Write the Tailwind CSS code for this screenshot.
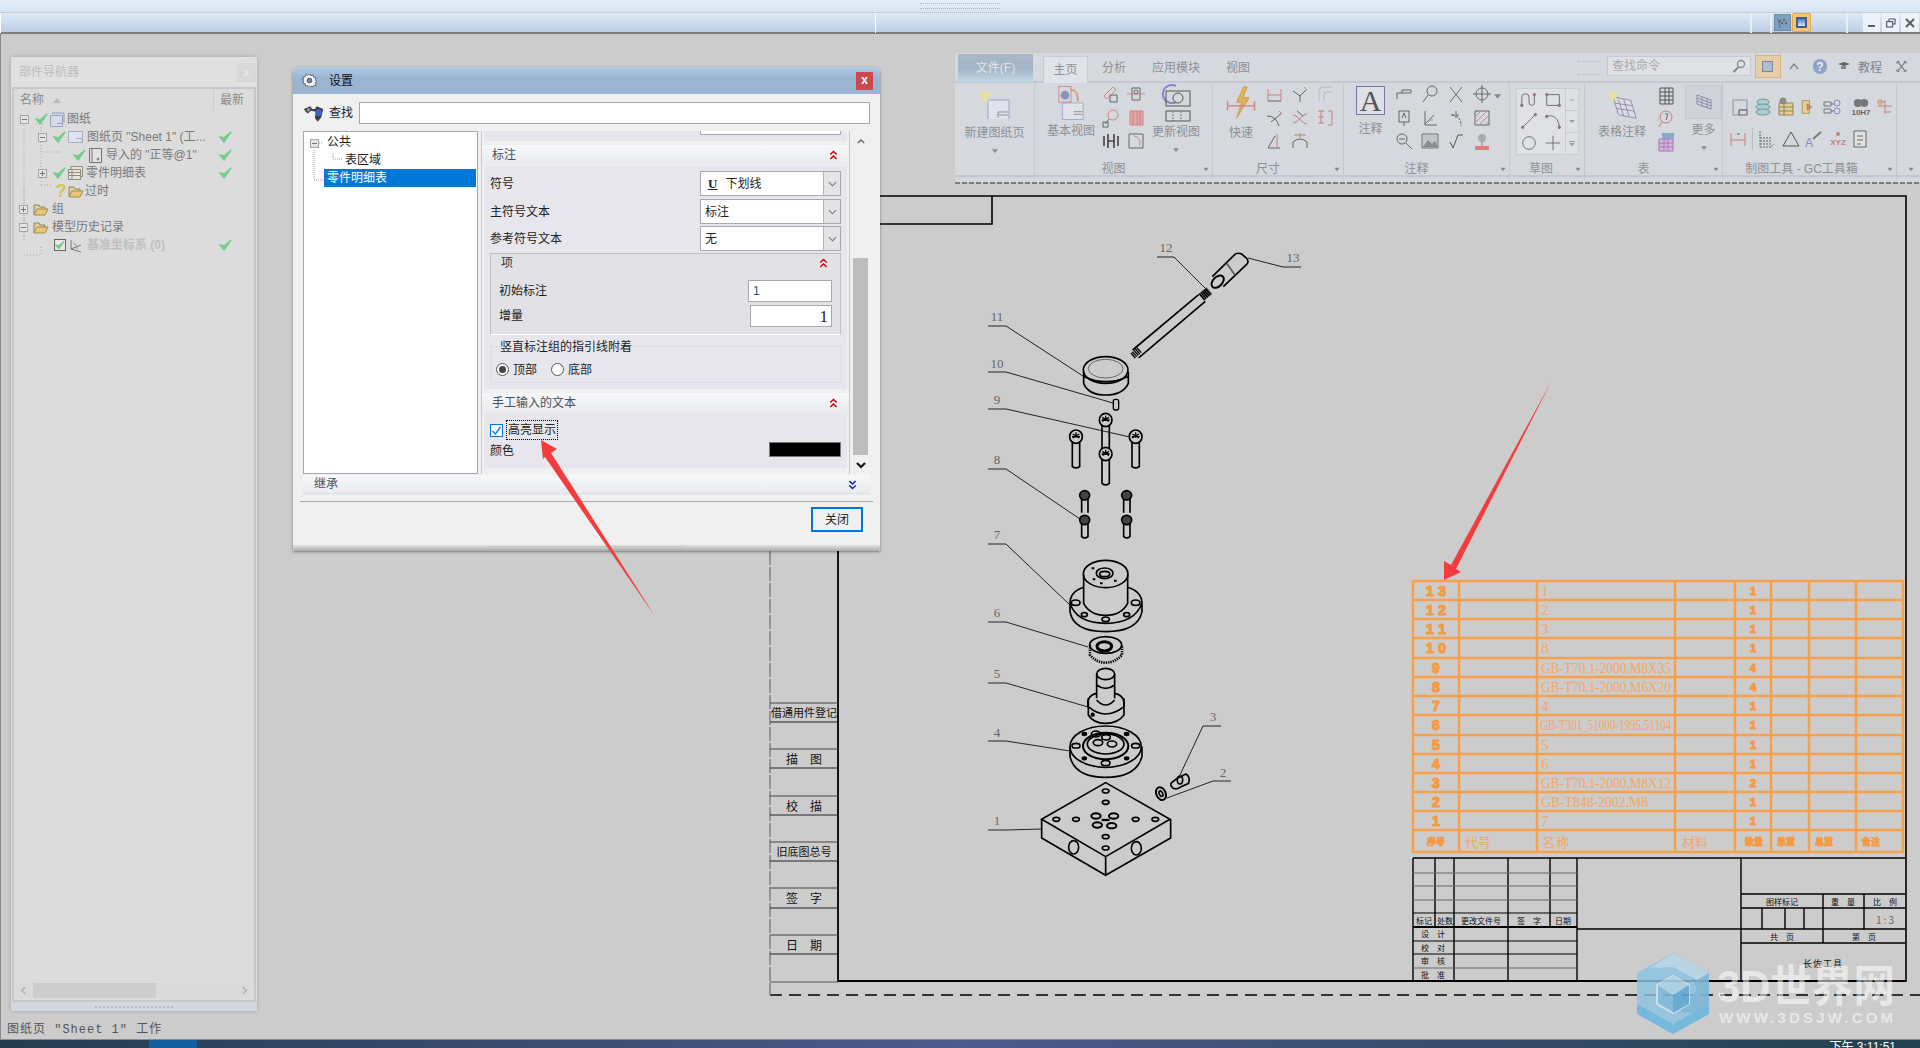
<!DOCTYPE html>
<html lang="zh-CN">
<head>
<meta charset="UTF-8">
<title>设置</title>
<script src="https://cdn.jsdelivr.net/npm/@tailwindcss/browser@4"></script>
</head>
<body class="relative w-[1920px] h-[1048px] overflow-hidden bg-[#cccccc] text-[12px] leading-none text-[#222] font-['Liberation_Sans','Noto_Sans_CJK_SC',sans-serif]">

<!-- shared symbols -->
<svg class="absolute w-0 h-0">
  <symbol id="chk" viewBox="0 0 13 12"><path d="M1 6l4 5L12 1 5 7z" fill="#76cc8b" stroke="#76cc8b" stroke-width="1.4"/></symbol>
  <symbol id="folder" viewBox="0 0 16 14"><path d="M1 13V3h5l1 2h5v2" fill="#e2cf9c" stroke="#8f8468"/><path d="M1 13l3-6h11l-3 6z" fill="#e9c876" stroke="#a08c58"/></symbol>
  <symbol id="minus" viewBox="0 0 9 9"><rect x=".5" y=".5" width="8" height="8" fill="#e4e4e4" stroke="#a5a5a5"/><path d="M2 4.5h5" stroke="#777"/></symbol>
  <symbol id="plus" viewBox="0 0 9 9"><rect x=".5" y=".5" width="8" height="8" fill="#e4e4e4" stroke="#a5a5a5"/><path d="M2 4.5h5M4.5 2v5" stroke="#777"/></symbol>
  <symbol id="up2" viewBox="0 0 10 12"><path d="M1.5 5L5 1.5 8.5 5M1.5 10L5 6.5 8.5 10" fill="none" stroke="currentColor" stroke-width="1.5"/></symbol>
  <symbol id="down2" viewBox="0 0 10 12"><path d="M1.5 2L5 5.5 8.5 2M1.5 7L5 10.5 8.5 7" fill="none" stroke="currentColor" stroke-width="1.5"/></symbol>
  <symbol id="dd" viewBox="0 0 10 6"><path d="M1 1l4 4 4-4" fill="none" stroke="#777" stroke-width="1.2"/></symbol>
  <g id="screw"><ellipse cx="0" cy="0" rx="19" ry="20" fill="#ccc" stroke="#000" stroke-width="5"/><path d="M-10-8l20 12M10-8L-10 4M0-13v16M-12 0h24" stroke="#000" stroke-width="4"/></g>
</svg>

<!-- top window strip -->
<div class="absolute left-0 top-0 w-full h-[12px] bg-gradient-to-b from-[#e6eff9] to-[#d6e4f4] flex justify-center">
  <div class="w-[80px] h-[6px] mt-[3px] border-y border-dotted border-[#a9b6c6]"></div>
</div>
<div class="absolute left-0 top-[13px] w-full h-[21px] bg-gradient-to-b from-[#dfe9f5] to-[#bccfe6] border-b-2 border-[#7d7d7d] flex items-start">
  <div class="w-px h-[20px] bg-white"></div>
  <div class="ml-[874px] w-px h-[20px] bg-white"></div>
  <div class="ml-[874px] w-[2px] h-[20px] bg-[#e9eef5]"></div>
  <div class="ml-[18px] w-[2px] h-[20px] bg-[#e9eef5]"></div>
  <div class="ml-[2px] w-[17px] h-[17px] mt-px bg-[#7ba0c4] border border-[#6c8cab] flex items-center justify-center">
    <svg viewBox="0 0 14 14" class="w-[14px] h-[14px]"><path d="M2 3l9-1 1 6-8 2z" fill="#8c9aab"/><path d="M3 4h2v2H3zM7 3h2v2H7zM5 6h2v2H5zM9 6h2v2H9z" fill="#5d6b7c"/><path d="M2 3l2 9" stroke="#5d6b7c"/></svg>
  </div>
  <div class="ml-[1px] w-[19px] h-[19px] bg-[#f2c878] border border-[#e3a845] rounded-[2px] flex items-center justify-center">
    <div class="w-[11px] h-[11px] border-2 border-[#4b5c7d] bg-gradient-to-b from-[#3f7fd0] to-[#dfeaf7]"></div>
  </div>
  <div class="ml-[35px] w-[2px] h-[20px] bg-[#e9eef5]"></div>
  <div class="ml-[15px] w-[17px] h-[19px] bg-[#edf2f8] flex items-end justify-center pb-[5px]"><div class="w-[7px] h-[2px] bg-[#54606e]"></div></div>
  <div class="ml-[2px] w-[17px] h-[19px] bg-[#edf2f8] flex items-center justify-center">
    <svg viewBox="0 0 10 10" class="w-[10px] h-[10px]" fill="none" stroke="#54606e" stroke-width="1.2"><rect x=".6" y="3.6" width="6" height="5.4"/><path d="M3 3V1h6v5H7"/></svg>
  </div>
  <div class="ml-[2px] w-[18px] h-[19px] bg-[#edf2f8] flex items-center justify-center">
    <svg viewBox="0 0 10 10" class="w-[10px] h-[10px]" stroke="#54606e" stroke-width="2"><path d="M1 1l8 8M9 1l-8 8"/></svg>
  </div>
</div>
<div class="absolute left-0 top-[34px] w-px h-[1006px] bg-[#8a8a8a]"></div>

<!-- drawing sheet -->
<svg class="absolute left-0 top-0" width="1920" height="1048" viewBox="0 0 1920 1048" fill="none">
  <g stroke="#000">
    <path d="M880 196H1906V982M880 224H992V196" stroke-width="1.6"/>
    <path d="M838 551V981H1905" stroke-width="1.8"/>
    <path d="M770 995H1920" stroke-dasharray="12 7" stroke-width="1.3"/>
    <path d="M770 551V995" stroke="#777" stroke-dasharray="14 2" stroke-width="1.3"/>
    <path d="M770 982H838" stroke="#555"/>
    <path d="M770 703H838M770 749H838M770 796H838M770 842H838M770 888H838M770 935H838" stroke="#444"/>
    <path d="M770 722H838M770 815H838M770 861H838M770 908H838M770 768H838M770 954H838" stroke="#222"/>
  </g>
  <path d="M955 183H1920" stroke="#7b7b7b" stroke-width="2" stroke-dasharray="5 2"/>
  <g fill="#111" font-size="11" text-anchor="middle" class="font-['Noto_Sans_CJK_SC',sans-serif]">
    <text x="804" y="717">借通用件登记</text>
    <text x="804" y="764" font-size="12">描　图</text>
    <text x="804" y="811" font-size="12">校　描</text>
    <text x="804" y="856">旧底图总号</text>
    <text x="804" y="903" font-size="12">签　字</text>
    <text x="804" y="950" font-size="12">日　期</text>
  </g>

  <!-- leaders and balloons -->
  <g stroke="#222" stroke-width="1">
    <path d="M1157 257h17l31 31M1248 258l35 9h18M988 326h18l77 50M988 372h18l107 31M988 409h18l124 28M988 469h18l74 50M988 544h18l64 61M988 622h18l82 25M988 683h18l82 24M988 741h18l64 10M988 830h18l36-1M1221 726h-18l-23 49M1231 781h-18l-46 17"/>
  </g>
  <g fill="#666" font-size="13" text-anchor="middle" class="font-['Liberation_Serif',serif]">
    <text x="1166" y="252">12</text><text x="1293" y="262">13</text><text x="997" y="321">11</text><text x="997" y="368">10</text>
    <text x="997" y="404">9</text><text x="997" y="464">8</text><text x="997" y="539">7</text><text x="997" y="617">6</text>
    <text x="997" y="678">5</text><text x="997" y="737">4</text><text x="997" y="825">1</text><text x="1213" y="721">3</text><text x="1223" y="777">2</text>
  </g>

  <!-- upper parts, in 3x crop coordinates -->
  <g transform="translate(960 220) scale(.3333)" stroke="#000" stroke-width="5">
    <path d="M518 390L716 224M536 414L736 244"/>
    <path d="M724 232L748 212" stroke-width="26" stroke-dasharray="5 1"/>
    <path d="M518 408L540 388" stroke-width="20" stroke-dasharray="4 2"/>
    <path d="M757 170L825 103Q835 97 845 102L860 115Q868 125 860 133L790 200"/>
    <ellipse cx="773" cy="185" rx="22" ry="14" transform="rotate(-45 773 185)" stroke-width="6"/>
    <path d="M800 130L825 165" stroke="#666" stroke-width="6"/>
    <ellipse cx="437" cy="450" rx="67" ry="40"/>
    <path d="M371 455V490Q385 525 437 525T505 490V455M373 470Q437 500 503 470"/>
    <ellipse cx="437" cy="446" rx="52" ry="28" stroke="#666" stroke-width="3"/>
    <rect x="460" y="538" width="16" height="32" rx="6" stroke-width="4"/>
    <path d="M426 600V690M448 600V690M426 702V790Q437 800 448 790V702M337 650V740Q348 748 359 740V650M516 650V740Q527 748 538 740V650"/>
    <use href="#screw" x="437" y="600"/><use href="#screw" x="348" y="650"/><use href="#screw" x="527" y="650"/><use href="#screw" x="437" y="702"/>
    <path d="M365 826V878M384 826V878M491 826V878M510 826V878M365 900V950Q374 958 384 950V900M491 900V950Q500 958 510 950V900"/>
    <ellipse cx="374" cy="826" rx="15" ry="14" fill="#444"/><ellipse cx="500" cy="826" rx="15" ry="14" fill="#444"/>
    <ellipse cx="374" cy="900" rx="15" ry="14" fill="#444"/><ellipse cx="500" cy="900" rx="15" ry="14" fill="#444"/>
    <path d="M371 1102C340 1112 330 1130 330 1150V1175Q340 1235 437 1235T546 1175V1150C546 1130 534 1112 503 1102M330 1150Q350 1210 437 1210T546 1150"/>
    <ellipse cx="437" cy="1062" rx="67" ry="41"/>
    <path d="M371 1065V1150Q390 1186 437 1186T503 1150V1065"/>
    <ellipse cx="434" cy="1060" rx="25" ry="16" stroke-width="5"/><ellipse cx="434" cy="1062" rx="15" ry="8"/>
    <path d="M395 1045h8M398 1078h8M462 1082h8M420 1090h8" stroke-width="6"/>
  </g>

  <!-- lower parts, in 3x crop coordinates -->
  <g transform="translate(960 600) scale(.3333)" stroke="#000" stroke-width="5">
    <ellipse cx="347" cy="8" rx="13" ry="8"/><ellipse cx="527" cy="8" rx="13" ry="8"/><ellipse cx="373" cy="44" rx="9" ry="6"/><ellipse cx="500" cy="44" rx="9" ry="6"/><ellipse cx="437" cy="58" rx="11" ry="7"/>
    <path d="M390 135V165Q410 188 437 188T486 165V135" stroke-width="8" stroke-dasharray="4 3"/>
    <ellipse cx="437" cy="135" rx="48" ry="25"/>
    <ellipse cx="433" cy="139" rx="22" ry="14" stroke-width="9"/>
    <path d="M410 222V295M464 222V295M385 295V345Q400 370 437 370T492 345V295"/>
    <ellipse cx="437" cy="222" rx="27" ry="17"/>
    <path d="M410 280C385 285 380 305 385 320Q410 342 437 342T492 320C495 305 490 285 464 280M410 300Q437 330 464 300M410 255Q437 275 464 255"/>
    <circle cx="398" cy="344" r="4" fill="#000"/>
    <ellipse cx="437" cy="440" rx="107" ry="62"/>
    <path d="M330 440V470Q345 532 437 532T546 470V440"/>
    <ellipse cx="437" cy="438" rx="68" ry="40" stroke-width="6"/>
    <ellipse cx="437" cy="432" rx="55" ry="30"/>
    <ellipse cx="408" cy="402" rx="14" ry="9"/><ellipse cx="438" cy="412" rx="13" ry="8"/><ellipse cx="414" cy="428" rx="14" ry="9"/><ellipse cx="456" cy="432" rx="14" ry="9"/>
    <ellipse cx="348" cy="437" rx="12" ry="7"/><ellipse cx="527" cy="437" rx="12" ry="7"/><ellipse cx="437" cy="489" rx="13" ry="8"/>
    <ellipse cx="373" cy="402" rx="6" ry="4" fill="#000"/><ellipse cx="500" cy="402" rx="6" ry="4" fill="#000"/><ellipse cx="373" cy="475" rx="6" ry="4" fill="#000"/><ellipse cx="500" cy="475" rx="6" ry="4" fill="#000"/>
    <path d="M652 535L678 522Q692 530 686 550L660 562Q650 570 640 565Q628 555 635 548z"/>
    <ellipse cx="660" cy="540" rx="8" ry="12"/>
    <ellipse cx="603" cy="581" rx="14" ry="20" transform="rotate(-25 603 581)" stroke-width="6"/><ellipse cx="603" cy="581" rx="5" ry="9" transform="rotate(-25 603 581)"/>
    <path d="M437 548L630 658 437 770 245 658zM245 658V714L437 826 632 714V658M437 770V826"/>
    <ellipse cx="437" cy="573" rx="10" ry="6"/><ellipse cx="437" cy="607" rx="10" ry="6"/><ellipse cx="289" cy="658" rx="10" ry="6"/><ellipse cx="348" cy="658" rx="10" ry="6"/><ellipse cx="527" cy="658" rx="10" ry="6"/><ellipse cx="586" cy="658" rx="10" ry="6"/><ellipse cx="437" cy="710" rx="10" ry="6"/><ellipse cx="437" cy="744" rx="10" ry="6"/>
    <ellipse cx="408" cy="648" rx="14" ry="8" stroke-width="6"/><ellipse cx="461" cy="648" rx="14" ry="8" stroke-width="6"/><ellipse cx="412" cy="675" rx="14" ry="8" stroke-width="6"/><ellipse cx="455" cy="677" rx="14" ry="8" stroke-width="6"/>
    <path d="M425 660h24" stroke-width="7"/>
    <ellipse cx="341" cy="742" rx="15" ry="20"/><ellipse cx="529" cy="745" rx="15" ry="20"/>
  </g>

  <!-- parts list -->
  <g stroke="#f9a04b" stroke-width="2.5">
    <rect x="1413" y="581" width="490" height="271"/>
    <path d="M1413 600H1903M1413 619H1903M1413 638H1903M1413 658H1903M1413 677H1903M1413 696H1903M1413 715H1903M1413 735H1903M1413 754H1903M1413 773H1903M1413 792H1903M1413 811H1903M1413 830H1903"/>
    <path d="M1459 581V852M1537 581V852M1675 581V852M1735 581V852M1771 581V852M1809 581V852M1856 581V852"/>
  </g>
  <g fill="#f59a45" stroke="#f59a45" stroke-width="1.2" font-weight="700" font-size="14" text-anchor="middle" class="font-['Liberation_Sans',sans-serif]">
    <text x="1436" y="596" textLength="20">13</text><text x="1436" y="615" textLength="20">12</text><text x="1436" y="634" textLength="20">11</text><text x="1436" y="653" textLength="20">10</text>
    <text x="1436" y="673">9</text><text x="1436" y="692">8</text><text x="1436" y="711">7</text><text x="1436" y="730">6</text><text x="1436" y="750">5</text><text x="1436" y="769">4</text><text x="1436" y="788">3</text><text x="1436" y="807">2</text><text x="1436" y="826">1</text>
    <text x="1753" y="595" font-size="11">1</text><text x="1753" y="614" font-size="11">1</text><text x="1753" y="633" font-size="11">1</text><text x="1753" y="652" font-size="11">1</text><text x="1753" y="672" font-size="11">4</text><text x="1753" y="691" font-size="11">4</text><text x="1753" y="710" font-size="11">1</text><text x="1753" y="729" font-size="11">1</text><text x="1753" y="749" font-size="11">1</text><text x="1753" y="768" font-size="11">1</text><text x="1753" y="787" font-size="11">2</text><text x="1753" y="806" font-size="11">1</text><text x="1753" y="825" font-size="11">1</text>
  </g>
  <g fill="#f4a766" font-size="15" class="font-['Liberation_Serif',serif]">
    <text x="1541" y="596">1</text><text x="1541" y="615">2</text><text x="1541" y="634">3</text><text x="1541" y="653">8</text>
    <text x="1541" y="673" textLength="130" lengthAdjust="spacingAndGlyphs">GB-T70.1-2000,M8X35</text>
    <text x="1541" y="692" textLength="130" lengthAdjust="spacingAndGlyphs">GB-T70.1-2000,M6X20</text>
    <text x="1541" y="711">4</text>
    <text x="1540" y="730" textLength="131" lengthAdjust="spacingAndGlyphs">GB-T301_51000-1995,51104</text>
    <text x="1541" y="750">5</text><text x="1541" y="769">6</text>
    <text x="1541" y="788" textLength="130" lengthAdjust="spacingAndGlyphs">GB-T70.1-2000,M8X12</text>
    <text x="1541" y="807" textLength="107" lengthAdjust="spacingAndGlyphs">GB-T848-2002,M8</text>
    <text x="1541" y="826">7</text>
  </g>
  <g fill="#f4a766" font-size="13" class="font-['Noto_Sans_CJK_SC',sans-serif]">
    <text x="1465" y="847" textLength="26">代号</text><text x="1542" y="847" textLength="27">名称</text><text x="1682" y="847" textLength="26">材料</text>
  </g>
  <g fill="#f59a45" stroke="#f59a45" stroke-width=".8" font-size="9" font-weight="700" class="font-['Noto_Sans_CJK_SC',sans-serif]">
    <text x="1427" y="845">序号</text><text x="1745" y="845">数量</text><text x="1777" y="845">单重</text><text x="1815" y="845">总重</text><text x="1862" y="845">备注</text>
  </g>

  <!-- title block -->
  <g stroke="#000" stroke-width="1.4">
    <path d="M1413 858H1905M1413 858V981M1435 858V927M1454 858V981M1508 858V981M1550 858V927M1577 858V981M1741 858V981M1577 929H1905M1741 894H1905M1741 908H1905M1741 943H1905M1823 894V943M1864 894V930M1762 908V929M1785 908V929M1804 908V929"/>
    <path d="M1413 927H1577" stroke-width="2"/>
    <path d="M1413 913H1577M1413 941H1577M1413 954H1577" stroke-width="1.2"/>
    <path d="M1413 873H1577M1413 886H1577M1413 900H1577M1413 968H1577" stroke="#666" stroke-width="1.2"/>
  </g>
  <g fill="#111" font-size="8" text-anchor="middle" class="font-['Noto_Sans_CJK_SC',sans-serif]">
    <text x="1424" y="924">标记</text><text x="1445" y="924">处数</text><text x="1481" y="924">更改文件号</text><text x="1529" y="924">签　字</text><text x="1563" y="924">日期</text>
    <text x="1433" y="937">设　计</text><text x="1433" y="951">校　对</text><text x="1433" y="964">审　核</text><text x="1433" y="978">批　准</text>
    <text x="1782" y="905">图样标记</text><text x="1843" y="905">重　量</text><text x="1885" y="905">比　例</text>
    <text x="1885" y="924" fill="#666" font-size="10" textLength="18">1:3</text>
    <text x="1782" y="940">共　页</text><text x="1864" y="940">第　页</text>
    <text x="1823" y="967" font-size="9" letter-spacing="1">长佐工具</text>
  </g>

  <!-- red annotation arrow over the list -->
  <path d="M1444 580L1444 561 1451 565 1551 382 1456 569 1461 572z" fill="#f33c3c"/>

  <!-- watermark -->
  <g opacity=".9">
    <path d="M1673 953L1709 973V1014L1673 1034 1637 1014V973z" fill="#8dc4e2" fill-opacity=".9"/>
    <path d="M1673 953L1709 973V1014L1680 1012 1697 990C1690 970 1680 960 1673 953z" fill="#7cb6d8"/>
    <path d="M1637 1004L1673 1024 1709 1004V1014L1673 1034 1637 1014z" fill="#6cb7de"/>
    <path d="M1673 953L1709 973 1697 980 1673 967 1650 968z" fill="#b7d6e8"/>
    <path d="M1673 976L1689 985V1004L1673 1013 1657 1004V985z" fill="#7fbbdb" stroke="#cfe0ea" stroke-width="2"/>
    <path d="M1673 995V1013L1689 1004V985z" fill="#5fa8d2"/>
    <path d="M1657 985L1673 976 1689 985 1673 995z" fill="#a9d2e8"/>
  </g>
  <g fill="#fff" fill-opacity=".55" text-anchor="start" class="font-['Liberation_Sans','Noto_Sans_CJK_SC',sans-serif]">
    <text x="1717" y="1002" font-size="44" font-weight="700" textLength="178" lengthAdjust="spacingAndGlyphs">3D世界网</text>
    <text x="1719" y="1023" font-size="15" font-weight="700" textLength="174" lengthAdjust="spacing">WWW.3DSJW.COM</text>
  </g>
</svg>

<!-- part navigator -->
<div class="absolute left-[11px] top-[57px] w-[246px] h-[954px] bg-[#e0e0e0] shadow-[0_0_4px_rgba(0,0,0,0.2)] flex flex-col">
  <div class="h-[30px] flex items-center pl-[8px] text-[#bdbdbd] shrink-0">
    部件导航器
    <div class="ml-auto mr-px w-[19px] h-[19px] bg-[#d8d8d8] text-[#ececec] flex items-center justify-center">x</div>
  </div>
  <div class="relative mx-px flex-1 border-2 border-[#c8c8cc] bg-[#dcdcdc] flex flex-col text-[#8a8a8a]">
    <div class="flex items-center h-[22px] pl-[6px] text-[#8a8a8a]">
      名称
      <div class="ml-[9px] w-0 h-0 border-x-[4px] border-x-transparent border-b-[5px] border-b-[#b9b9b9]"></div>
      <div class="ml-auto h-[21px] w-px bg-[#cbcbcb]"></div>
      <span class="ml-[6px] mr-[10px]">最新</span>
    </div>
    <svg class="absolute left-0 top-0 pointer-events-none" width="100" height="190" fill="none" stroke="#a9a9a9" stroke-dasharray="1 2">
      <path d="M10 33V156M27 38V96M27 63H47M27 96H38M10 98V148M10 166H27V156M22 35h8"/>
    </svg>
    <div class="relative h-[18px] -mt-px flex items-center pl-[6px] gap-[7px]"><svg class="w-[9px] h-[9px]"><use href="#minus"/></svg><svg class="w-[13px] h-[12px] -ml-px"><use href="#chk"/></svg>
      <svg class="w-[16px] h-[15px] -ml-[6px]" viewBox="0 0 16 15" fill="#d6dbe8" stroke="#98a0bd"><path d="M3 1h12v10"/><path d="M1.500 3.500h12v11h-12z"/><path d="M8 11.500h5"/></svg><span class="-ml-[5px] text-[#7a7a7a]">图纸</span></div>
    <div class="relative h-[18px] flex items-center pl-[24px] gap-[7px]"><svg class="w-[9px] h-[9px]"><use href="#minus"/></svg><svg class="w-[13px] h-[12px] -ml-px"><use href="#chk"/></svg>
      <svg class="w-[15px] h-[12px] -ml-[5px]" viewBox="0 0 15 12" fill="#dfe3ee" stroke="#a7aec4"><path d="M.5.500h14v11H.5z"/><path d="M8 7.500h6V11"/></svg><span class="-ml-[3px] whitespace-nowrap text-[#7a7a7a]">图纸页 "Sheet 1" (工...</span>
      <svg class="absolute left-[205px] w-[13px] h-[12px]"><use href="#chk"/></svg></div>
    <div class="relative h-[18px] flex items-center pl-[59px] gap-[3px]"><svg class="w-[13px] h-[12px]"><use href="#chk"/></svg>
      <svg class="w-[13px] h-[15px]" viewBox="0 0 13 15" fill="#e2e2e2" stroke="#737373"><path d="M.5.500h12v14H.5zM3 .5v14"/><circle cx="9" cy="11" r="1"/></svg><span class="ml-px whitespace-nowrap text-[#7a7a7a]">导入的 "正等@1"</span>
      <svg class="absolute left-[205px] w-[13px] h-[12px]"><use href="#chk"/></svg></div>
    <div class="relative h-[18px] flex items-center pl-[24px] gap-[7px]"><svg class="w-[9px] h-[9px]"><use href="#plus"/></svg><svg class="w-[13px] h-[12px] -ml-px"><use href="#chk"/></svg>
      <svg class="w-[15px] h-[14px] -ml-[5px]" viewBox="0 0 15 14" fill="#e6e6d8" stroke="#8b8b80"><path d="M3 .5h11.500v10H3z"/><path d="M.5 3.500h12v10H.5zM.5 6.500h12M.5 9.500h12M4 3.500v10"/></svg><span class="-ml-[4px] text-[#7a7a7a]">零件明细表</span>
      <svg class="absolute left-[205px] w-[13px] h-[12px]"><use href="#chk"/></svg></div>
    <div class="relative h-[18px] flex items-center pl-[41px] gap-[1px]"><span class="w-[12px] text-center text-[18px] font-bold text-[#d9c44f]">?</span><svg class="w-[16px] h-[14px]"><use href="#folder"/></svg><span class="text-[#7a7a7a]">过时</span></div>
    <div class="relative h-[18px] flex items-center pl-[5px] gap-[5px]"><svg class="w-[9px] h-[9px]"><use href="#plus"/></svg><svg class="w-[16px] h-[14px]"><use href="#folder"/></svg><span class="-ml-[2px] text-[#7a7a7a]">组</span></div>
    <div class="relative h-[18px] flex items-center pl-[5px] gap-[5px]"><svg class="w-[9px] h-[9px]"><use href="#minus"/></svg><svg class="w-[16px] h-[14px]"><use href="#folder"/></svg><span class="-ml-[2px] text-[#7a7a7a]">模型历史记录</span></div>
    <div class="relative h-[18px] flex items-center pl-[40px] gap-[3px]">
      <div class="w-[12px] h-[12px] border border-[#666] bg-[#e8e8e8] flex items-center justify-center"><svg class="w-[11px] h-[10px]"><use href="#chk"/></svg></div>
      <svg class="w-[15px] h-[15px]" viewBox="0 0 15 15" fill="none"><path d="M2 2v9l10-4M2 11l10 3" stroke="#777"/><path d="M5 5l4 6" stroke="#999"/></svg>
      <span class="font-bold text-[#c0c0c0]">基准坐标系 (0)</span>
      <svg class="absolute left-[205px] w-[13px] h-[12px]"><use href="#chk"/></svg></div>
    <div class="mt-auto mb-[2px] h-[15px] mx-[2px] bg-[#dadada] flex items-center text-[#b0b0b0]">
      <svg viewBox="0 0 8 10" class="w-[7px] h-[9px] ml-[4px]" fill="none" stroke="#b5b5b5" stroke-width="2"><path d="M6 1L2 5l4 4"/></svg>
      <div class="ml-[6px] w-[123px] h-[15px] bg-[#cdcdcd]"></div>
      <svg viewBox="0 0 8 10" class="ml-auto mr-[4px] w-[7px] h-[9px]" fill="none" stroke="#b5b5b5" stroke-width="2"><path d="M2 1l4 4-4 4"/></svg>
    </div>
  </div>
  <div class="h-[9px] bg-[#d3d8de] flex items-center justify-center shrink-0"><div class="w-[78px] border-t-2 border-dotted border-[#b9bdc3]"></div></div>
</div>

<!-- ribbon -->
<div class="absolute left-[955px] top-[53px] w-[965px] h-[129px] bg-[#d5d8dd] flex flex-col text-[#8d9196]">
  <div class="h-[30px] flex items-start border-b-2 border-[#c5c9cf]">
    <div class="ml-[3px] mt-px w-[75px] h-[28px] bg-gradient-to-b from-[#a9b9c8] via-[#a3b4c5] to-[#c3d8e6] flex items-center justify-center text-[#e0e3e8]">文件(F)</div>
    <div class="ml-[10px] mt-[3px] w-[45px] h-[27px] bg-[#dfe2e6] border-x border-t border-[#c9cdd3] flex items-center justify-center">主页</div>
    <div class="ml-[14px] mt-[9px]">分析</div>
    <div class="ml-[26px] mt-[9px]">应用模块</div>
    <div class="ml-[26px] mt-[9px]">视图</div>
    <div class="ml-auto mt-[8px] w-[22px] h-[14px] border-y border-dotted border-[#b4b8be]"></div>
    <div class="ml-[7px] mt-[3px] w-[144px] h-[20px] bg-[#dfe1e4] border border-[#c6c9ce] flex items-center pl-[4px] text-[#a8abb0]">查找命令
      <svg viewBox="0 0 14 14" class="ml-auto mr-[4px] w-[14px] h-[14px]" fill="none" stroke="#85898f" stroke-width="1.3"><circle cx="9" cy="5" r="3.500"/><path d="M6.500 8L1.500 13" stroke-width="2"/></svg></div>
    <div class="ml-[4px] mt-[2px] w-[26px] h-[23px] bg-[#e4cfa8] border border-[#d8b57c] flex items-center justify-center"><div class="w-[11px] h-[11px] bg-[#aac0d2] border border-[#7f8a96]"></div></div>
    <svg viewBox="0 0 10 8" class="ml-[8px] mt-[9px] w-[10px] h-[8px]" fill="none" stroke="#7f8389" stroke-width="1.300"><path d="M1 7l4-5 4 5"/></svg>
    <div class="ml-[14px] mt-[6px] w-[14px] h-[15px] rounded-full bg-[#8fa3c9] text-[#e8ebf0] font-bold flex items-center justify-center">?</div>
    <svg viewBox="0 0 14 10" class="ml-[10px] mt-[8px] w-[14px] h-[10px]"><path d="M1 3l6-2 6 2-6 2z" fill="#5f6368"/><path d="M4 5v3h5V5" fill="#888"/></svg>
    <span class="ml-[7px] mt-[9px] text-[#7f8389]">教程</span>
    <svg viewBox="0 0 12 12" class="ml-[13px] mr-[12px] mt-[7px] w-[13px] h-[13px]" fill="none" stroke="#84888e" stroke-width="1.300"><path d="M2 1l8 10M10 1L2 11M1 3l3-2M8 1l3 2M1 9l3 2M8 11l3-2"/></svg>
  </div>
  <div class="relative flex h-[97px] text-[12px]">
    <div class="absolute left-0 right-0 bottom-[3px] h-[2px] bg-[#c4c8ce]"></div>
    <!-- new sheet -->
    <div class="w-[80px] border-r border-[#c6cad0] flex flex-col items-center">
      <svg viewBox="0 0 30 32" class="mt-[4px] w-[30px] h-[32px]" fill="none"><path d="M8 13h21v20H8z" fill="#e0e3ec" stroke="#9ca3c0"/><path d="M18 25h10M18 28h10M18 25v6" stroke="#8a8f99"/><path d="M5 0l2 6 6 1-5 3 1 6-4-4-5 3 2-5-3-4 5 0z" fill="#e7e19c"/></svg>
      <span class="mt-[8px]">新建图纸页</span>
      <svg viewBox="0 0 8 5" class="mt-[10px] w-[6px] h-[4px]"><path d="M0 0h8L4 5z" fill="#85898f"/></svg>
    </div>
    <!-- view -->
    <div class="relative w-[178px] border-r border-[#c6cad0] flex flex-col">
      <div class="flex h-[72px]">
        <div class="ml-[8px] w-[56px] flex flex-col items-center">
          <svg viewBox="0 0 30 40" class="mt-[1px] w-[26px] h-[38px]" fill="none"><path d="M5 20h24v19H5z" fill="#e0e3ec" stroke="#9ca3c0"/><path d="M18 30h10M18 33h10" stroke="#888"/><rect x="1" y="1" width="14" height="18" stroke="#d57f7c"/><circle cx="8" cy="11" r="5" fill="#8895bc"/><path d="M15 5c7 0 8 6 8 13" stroke="#d99a66" stroke-width="2"/></svg>
          <span class="mt-[3px] whitespace-nowrap">基本视图</span>
        </div>
        <div class="ml-[2px] w-[50px] grid grid-cols-2 grid-rows-3 pt-[1px]">
          <svg viewBox="0 0 20 20" fill="none" stroke="#666" class="w-5 h-5"><path d="M3 12L12 3l3 3-9 9z" stroke="#d08684"/><path d="M9 11h7v7H9z"/></svg>
          <svg viewBox="0 0 20 20" fill="none" stroke="#666" class="w-5 h-5"><path d="M6 4h8v12H6z"/><path d="M1 10h18" stroke="#d08684"/><circle cx="10" cy="8" r="2"/></svg>
          <svg viewBox="0 0 20 20" fill="none" stroke="#666" class="w-5 h-5"><circle cx="12" cy="7" r="5" stroke="#d08684"/><path d="M8 11l-4 5"/><rect x="2" y="14" width="5" height="5"/></svg>
          <svg viewBox="0 0 20 20" fill="none" stroke="#d08684" class="w-5 h-5"><path d="M4 3h13v14H4z" fill="#e2a7a4"/><path d="M7 3v14M11 3v14M14 3v14"/></svg>
          <svg viewBox="0 0 20 20" fill="none" stroke="#444" class="w-5 h-5"><path d="M3 5v10M7 3v14M13 3v14M17 5v10M7 10h6" stroke-width="1.600"/></svg>
          <svg viewBox="0 0 20 20" fill="none" stroke="#666" class="w-5 h-5"><path d="M3 3h14v14H3z"/><path d="M8 5c6 1 7 6 5 10" stroke="#d08684"/></svg>
        </div>
        <div class="w-[50px] flex flex-col items-center">
          <svg viewBox="0 0 30 40" class="mt-[1px] w-[30px] h-[40px]" fill="none"><path d="M15 2a9 9 0 1 0 0 16" stroke="#8a84c8" stroke-width="2"/><rect x="5" y="7" width="24" height="15" stroke="#555"/><circle cx="17" cy="14" r="5" stroke="#555"/><rect x="5" y="27" width="24" height="10" stroke="#555"/><path d="M12 27v10M20 27v10" stroke="#777" stroke-dasharray="2 1"/></svg>
          <span class="mt-[2px] whitespace-nowrap">更新视图</span>
          <svg viewBox="0 0 8 5" class="mt-[10px] w-[6px] h-[4px]"><path d="M0 0h8L4 5z" fill="#85898f"/></svg>
        </div>
      </div>
      <div class="mt-auto mb-[5px] text-center pr-[20px]">视图</div>
      <svg viewBox="0 0 6 6" class="absolute right-[3px] bottom-[8px] w-[6px] h-[5px]"><path d="M0 1h6L3 5z" fill="#85898f"/></svg>
    </div>
    <!-- dimension -->
    <div class="relative w-[131px] border-r border-[#c6cad0] flex flex-col">
      <div class="flex h-[72px]">
        <div class="w-[56px] flex flex-col items-center">
          <svg viewBox="0 0 32 40" class="mt-[3px] w-[32px] h-[36px]" fill="none"><path d="M19 1L11 18h6l-6 18 14-23h-7l5-12z" fill="#e0b15c" stroke="#cd9a48"/><path d="M1 22h30M1 17v10M31 17v10" stroke="#cf7f7d" stroke-width="1.500"/></svg>
          <span class="mt-[5px]">快速</span>
        </div>
        <div class="-ml-[4px] grid grid-cols-3 grid-rows-3 w-[75px] pt-[1px]">
          <svg viewBox="0 0 20 20" fill="none" stroke="#666" class="w-5 h-5"><path d="M3 5v12M16 5v12M3 11h13" stroke="#c97e7c"/><path d="M3 17h13"/></svg>
          <svg viewBox="0 0 20 20" fill="none" stroke="#666" class="w-5 h-5"><path d="M3 7l7 5 7-7M10 12v6"/><path d="M14 3l3 3" stroke="#c97e7c"/></svg>
          <svg viewBox="0 0 20 20" fill="none" stroke="#b5b8bc" class="w-5 h-5"><path d="M4 17V8q0-5 5-5h8M9 17v-6q0-3 3-3h5"/></svg>
          <svg viewBox="0 0 20 20" fill="none" stroke="#666" class="w-5 h-5"><path d="M2 8q9 0 12 10M6 14l11-9" /><path d="M14 3l3 3" stroke="#c97e7c"/></svg>
          <svg viewBox="0 0 20 20" fill="none" stroke="#c97e7c" class="w-5 h-5"><path d="M3 7c6 1 8 8 14 9M3 15c6-1 8-8 14-9"/><path d="M7 3l6 5" stroke="#666"/></svg>
          <svg viewBox="0 0 20 20" fill="none" stroke="#c97e7c" class="w-5 h-5"><path d="M3 3h6M3 9h6M3 15h6M6 3v12M13 3h4v14h-4"/></svg>
          <svg viewBox="0 0 20 20" fill="none" stroke="#666" class="w-5 h-5"><path d="M3 17L10 5M3 17h12"/><path d="M12 3v14" stroke="#c97e7c"/></svg>
          <svg viewBox="0 0 20 20" fill="none" stroke="#666" class="w-5 h-5"><path d="M3 17V11q7-6 14 0v6"/><path d="M4 4h12M10 2v5" stroke="#c97e7c"/></svg>
        </div>
      </div>
      <div class="mt-auto mb-[5px] text-center pr-[20px]">尺寸</div>
      <svg viewBox="0 0 6 6" class="absolute right-[3px] bottom-[8px] w-[6px] h-[5px]"><path d="M0 1h6L3 5z" fill="#85898f"/></svg>
    </div>
    <!-- annotation -->
    <div class="relative w-[166px] border-r border-[#c6cad0] flex flex-col">
      <div class="flex h-[72px]">
        <div class="ml-[12px] w-[29px] flex flex-col items-center">
          <div class="mt-[3px] w-[29px] h-[29px] border border-[#7e74a6] font-['Liberation_Serif',serif] text-[30px] text-[#555] flex items-center justify-center bg-[#dde0e4]">A</div>
          <span class="mt-[8px] whitespace-nowrap">注释</span>
        </div>
        <div class="ml-[9px] grid grid-cols-4 grid-rows-3 w-[100px] gap-x-[4px] pt-[1px]">
          <svg viewBox="0 0 20 20" fill="none" stroke="#666" class="w-5 h-5"><path d="M3 15V9h14v-3H8v3"/></svg>
          <svg viewBox="0 0 20 20" fill="none" stroke="#666" class="w-5 h-5"><circle cx="12" cy="7" r="5"/><path d="M8 11l-5 7"/></svg>
          <svg viewBox="0 0 20 20" fill="none" stroke="#666" class="w-5 h-5"><path d="M4 3l12 15M16 3L4 18"/></svg>
          <svg viewBox="0 0 20 20" fill="none" stroke="#666" class="w-5 h-5"><circle cx="10" cy="10" r="6"/><path d="M10 1v18M1 10h18"/></svg>
          <svg viewBox="0 0 20 20" fill="none" stroke="#666" class="w-5 h-5"><path d="M5 3h10v11H5zM10 14v4"/><path d="M8 10l2-5 2 5"/></svg>
          <svg viewBox="0 0 20 20" fill="none" stroke="#666" class="w-5 h-5"><path d="M5 3v14h12M5 16l9-9"/><path d="M9 12h4" stroke="#999"/></svg>
          <svg viewBox="0 0 20 20" fill="none" stroke="#666" class="w-5 h-5"><path d="M5 7c8 0 10 5 10 11M10 3v8M6 7h8" stroke-dasharray="3 1"/></svg>
          <svg viewBox="0 0 20 20" fill="none" stroke="#c98a88" class="w-5 h-5"><path d="M3 3h14v14H3z" stroke="#666"/><path d="M3 9l6-6M3 15L15 3M7 17L17 7M13 17l4-4"/></svg>
          <svg viewBox="0 0 20 20" fill="none" stroke="#666" class="w-5 h-5"><circle cx="8" cy="8" r="5"/><path d="M12 12l6 6M5 8h6"/></svg>
          <svg viewBox="0 0 20 20" class="w-5 h-5"><path d="M2 3h16v14H2z" fill="#c3c5c8" stroke="#777"/><path d="M3 16l5-7 4 4 3-3 3 6z" fill="#8a8c90"/></svg>
          <svg viewBox="0 0 20 20" fill="none" stroke="#555" class="w-5 h-5"><path d="M4 11l3 6 5-13h5"/></svg>
          <svg viewBox="0 0 20 20" class="w-5 h-5"><circle cx="10" cy="7" r="4" fill="#a9abad"/><path d="M10 10v5" stroke="#888"/><path d="M3 15h14v4H3z" fill="#dd7f7d"/></svg>
        </div>
        <svg viewBox="0 0 8 5" class="mt-[11px] w-[7px] h-[5px]"><path d="M0 0h8L4 5z" fill="#85898f"/></svg>
      </div>
      <div class="mt-auto mb-[5px] text-center pr-[20px]">注释</div>
      <svg viewBox="0 0 6 6" class="absolute right-[3px] bottom-[8px] w-[6px] h-[5px]"><path d="M0 1h6L3 5z" fill="#85898f"/></svg>
    </div>
    <!-- sketch -->
    <div class="relative w-[75px] border-r border-[#c6cad0] flex flex-col">
      <div class="ml-[6px] mt-[5px] h-[67px] w-[63px] bg-[#dfe1e4] border border-[#cacdd2] flex">
        <div class="w-[49px] grid grid-cols-2 grid-rows-3 justify-items-center items-center">
          <svg viewBox="0 0 20 20" fill="none" stroke="#666" class="w-[18px] h-[18px]"><path d="M2 16V7q0-4 4-4t4 4v6q0 3 3 3t3-3V4"/><circle cx="2" cy="16" r="1.300" fill="#c97e7c"/><circle cx="16" cy="4" r="1.300" fill="#c97e7c"/></svg>
          <svg viewBox="0 0 20 20" fill="none" stroke="#666" class="w-[18px] h-[18px]"><path d="M3 4h14v12H3z"/><circle cx="3" cy="4" r="1.300" fill="#c97e7c"/><circle cx="17" cy="16" r="1.300" fill="#c97e7c"/></svg>
          <svg viewBox="0 0 20 20" fill="none" stroke="#666" class="w-[18px] h-[18px]"><path d="M3 17L17 3"/><circle cx="3" cy="17" r="1.300" fill="#c97e7c"/><circle cx="17" cy="3" r="1.300" fill="#c97e7c"/></svg>
          <svg viewBox="0 0 20 20" fill="none" stroke="#666" class="w-[18px] h-[18px]"><path d="M3 5c8-3 14 3 14 13"/><circle cx="3" cy="5" r="1.300" fill="#c97e7c"/><circle cx="17" cy="17" r="1.300" fill="#c97e7c"/></svg>
          <svg viewBox="0 0 20 20" fill="none" stroke="#666" class="w-[18px] h-[18px]"><circle cx="10" cy="10" r="7"/></svg>
          <svg viewBox="0 0 20 20" fill="none" stroke="#666" class="w-[18px] h-[18px]"><path d="M10 2v16M2 10h16"/></svg>
        </div>
        <div class="w-[13px] border-l border-[#cacdd2] flex flex-col text-[#a5a8ad]">
          <div class="h-[22px] flex items-center justify-center border-b border-[#cacdd2]"><div class="w-0 h-0 border-x-[3px] border-x-transparent border-b-[3px] border-b-[#c0c3c7]"></div></div>
          <div class="h-[22px] flex items-center justify-center border-b border-[#cacdd2]"><div class="w-0 h-0 border-x-[3px] border-x-transparent border-t-[3px] border-t-[#9a9da2]"></div></div>
          <div class="flex-1 flex items-center justify-center"><div class="w-[6px] border-t border-[#9a9da2] pt-px"><div class="w-0 h-0 border-x-[3px] border-x-transparent border-t-[3px] border-t-[#9a9da2]"></div></div></div>
        </div>
      </div>
      <div class="mt-auto mb-[5px] text-center pr-[12px]">草图</div>
      <svg viewBox="0 0 6 6" class="absolute right-[3px] bottom-[8px] w-[6px] h-[5px]"><path d="M0 1h6L3 5z" fill="#85898f"/></svg>
    </div>
    <!-- table -->
    <div class="relative w-[138px] border-r border-[#c6cad0] flex flex-col">
      <div class="flex h-[72px]">
        <div class="ml-[8px] w-[62px] flex flex-col items-center">
          <svg viewBox="0 0 36 36" class="mt-[5px] w-[36px] h-[32px]" fill="none"><path d="M8 10l20 4 6 20-20-4z" fill="#dcdce4" stroke="#8d8aa8"/><path d="M14 13l6 19M20 13l6 19M10 17l20 3M12 23l20 3" stroke="#8d8aa8"/><path d="M8 0l2 6 6 1-5 3 1 6-4-4-5 3 2-5-3-4 5 0z" fill="#e7e19c"/></svg>
          <span class="mt-[6px] whitespace-nowrap">表格注释</span>
        </div>
        <div class="ml-[5px] w-[20px] flex flex-col pt-[3px] gap-[3px]">
          <svg viewBox="0 0 20 20" fill="none" stroke="#555" class="w-5 h-5"><path d="M4 2h13v16H4zM4 6h13M4 10h13M4 14h13M9 2v16M13 2v16"/></svg>
          <svg viewBox="0 0 20 20" fill="none" stroke="#c97e7c" class="w-5 h-5"><circle cx="10" cy="8" r="6"/><path d="M6 13l-3 5"/><path d="M9 5h3l-2 6" stroke="#666"/></svg>
          <svg viewBox="0 0 20 20" class="w-5 h-5"><path d="M3 7h14v12H3z" fill="#d6b6dc" stroke="#a27cb2"/><path d="M3 11h14M3 15h14M8 7v12M12 7v12" stroke="#a27cb2" fill="none"/><path d="M6 1h12v6H6z" fill="#8fa7cc"/></svg>
        </div>
        <div class="ml-[9px] flex flex-col items-center">
          <div class="w-[37px] h-[34px] mt-[2px] bg-[#cfd2d6] border border-[#c4c7cc] flex items-center justify-center">
            <svg viewBox="0 0 20 20" fill="none" stroke="#8d8aa8" class="w-5 h-5"><path d="M3 3l14 5v9L3 12zM3 6l14 5M3 9l14 5M8 5v10M13 6v10"/></svg>
          </div>
          <span class="mt-[5px]">更多</span>
          <svg viewBox="0 0 8 5" class="mt-[10px] w-[6px] h-[4px]"><path d="M0 0h8L4 5z" fill="#85898f"/></svg>
        </div>
      </div>
      <div class="mt-auto mb-[5px] text-center pr-[20px]">表</div>
      <svg viewBox="0 0 6 6" class="absolute right-[3px] bottom-[8px] w-[6px] h-[5px]"><path d="M0 1h6L3 5z" fill="#85898f"/></svg>
    </div>
    <!-- GC toolkit -->
    <div class="relative w-[174px] border-r border-[#c6cad0] flex flex-col">
      <div class="mt-[9px] pl-[7px] flex gap-[3px] h-[30px] items-center">
        <svg viewBox="0 0 20 20" fill="none" stroke="#8a90b8" class="w-5 h-5"><path d="M3 3h14v10H9v5H3z"/><path d="M9 13h8v5H9z" stroke="#666"/></svg>
        <svg viewBox="0 0 20 20" fill="#a9cdd0" stroke="#6f9399" class="w-5 h-5"><ellipse cx="10" cy="5" rx="6" ry="3"/><ellipse cx="10" cy="10" rx="7" ry="3"/><ellipse cx="10" cy="15" rx="7" ry="3"/></svg>
        <svg viewBox="0 0 20 20" fill="#e6cf95" stroke="#8d8560" class="w-5 h-5"><path d="M3 6h14v12H3z"/><path d="M3 10h14M3 14h14M8 6v12" fill="none"/><circle cx="7" cy="4" r="3" fill="#8d8d8d"/></svg>
        <svg viewBox="0 0 20 20" fill="#e6cf95" stroke="#a5884f" class="w-[16px] h-5"><path d="M4 2h9v16H4z"/><path d="M10 6l6 4-6 4z" fill="#c98a88"/></svg>
        <svg viewBox="0 0 20 20" fill="none" stroke="#777" class="ml-[4px] w-5 h-5"><path d="M2 5h7v4H2zM2 12h7v4H2zM9 7h3M9 14h3"/><circle cx="15" cy="6" r="3" stroke="#8a84c8"/><circle cx="15" cy="14" r="3" stroke="#8a84c8"/></svg>
        <div class="ml-[5px] w-[22px] flex flex-col items-center text-[8px] font-bold text-[#666]"><svg viewBox="0 0 20 12" class="w-[16px] h-[12px]" fill="#777"><ellipse cx="6" cy="6" rx="5" ry="5"/><ellipse cx="14" cy="6" rx="5" ry="5"/></svg>10H7</div>
        <svg viewBox="0 0 20 20" fill="none" stroke="#c97e7c" class="w-5 h-5"><path d="M3 9h14M10 3v14M4 5h6M10 15h6"/><path d="M3 3h4v4H3z" stroke="#c9a05c"/></svg>
      </div>
      <div class="mt-[5px] pl-[5px] flex items-center h-[24px]">
        <svg viewBox="0 0 20 20" fill="none" stroke="#c97e7c" class="w-5 h-5"><path d="M3 4v13M17 4v13M3 11h14"/><path d="M9 5h3" stroke="#666"/></svg>
        <div class="ml-[4px] w-px h-[22px] bg-[#b9bcc1]"></div>
        <svg viewBox="0 0 20 20" fill="none" stroke="#666" class="ml-[3px] w-5 h-5"><path d="M4 9h11M4 12h11M4 15h11M4 18h11M4 2v16" stroke-dasharray="2 1"/><path d="M15 18l3-3" stroke="#c97e7c"/></svg>
        <svg viewBox="0 0 20 20" fill="none" stroke="#555" class="ml-[5px] w-5 h-5"><path d="M10 3L2 17h16z"/></svg>
        <div class="relative ml-[4px] w-5 h-5 flex items-end text-[12px] text-[#8a84c8]">A<svg viewBox="0 0 20 20" fill="none" class="absolute left-0 top-0 w-5 h-5"><path d="M8 10l8-7" stroke="#777" stroke-width="2"/></svg></div>
        <div class="ml-[3px] w-[20px] flex flex-col items-center text-[8px] font-bold text-[#c97e7c]"><div class="w-[4px] h-[4px] rounded-full bg-[#c97e7c] mb-[3px]"></div>XYZ</div>
        <svg viewBox="0 0 20 20" fill="#e2e2e2" stroke="#666" class="ml-[2px] w-5 h-5"><path d="M4 2h12v16H4z"/><path d="M7 7h6M7 11h6M7 15h4" fill="none"/></svg>
      </div>
      <div class="mt-auto mb-[5px] text-center pr-[16px] whitespace-nowrap">制图工具 - GC工具箱</div>
      <svg viewBox="0 0 6 6" class="absolute right-[3px] bottom-[8px] w-[6px] h-[5px]"><path d="M0 1h6L3 5z" fill="#85898f"/></svg>
    </div>
    <div class="relative flex-1"><svg viewBox="0 0 6 6" class="absolute right-[6px] bottom-[8px] w-[6px] h-[5px]"><path d="M0 1h6L3 5z" fill="#85898f"/></svg></div>
  </div>
</div>

<!-- settings dialog -->
<div class="absolute left-[293px] top-[67px] w-[587px] h-[484px] bg-[#f0f0f0] rounded-t-[5px] shadow-[0_1px_3px_rgba(0,0,0,0.4)] flex flex-col">
  <div class="h-[27px] rounded-t-[5px] bg-gradient-to-b from-[#b3cce6] to-[#9ab4d2] from-0% to-40% flex items-center shrink-0">
    <svg viewBox="0 0 16 16" class="ml-[9px] w-[15px] h-[15px]"><path d="M8 1l1.500 2 2.500-1 .5 2.500 2.500.5-1 2.500 2 1.500-2 1.500 1 2.500-2.500.5-.5 1-2.500-.5L8 15l-1.500-1.500-2.500.5-.5-2.500-2.500-.5 1-2.500L0 7l2-.5-1-2 2.500-.5.5-2.500 2.500 1z" fill="#f4f4f4" stroke="#47525e" stroke-width=".8"/><circle cx="8" cy="8" r="2.500" fill="#6d8fb3" stroke="#333" stroke-width=".8"/></svg>
    <span class="ml-[12px] text-[#111]">设置</span>
    <div class="ml-auto mr-[7px] w-[17px] h-[18px] bg-[#c9494f] text-white font-bold flex items-center justify-center pb-[2px]">x</div>
  </div>
  <div class="mt-[8px] h-[22px] flex items-center shrink-0">
    <svg viewBox="0 0 24 20" class="ml-[10px] w-[22px] h-[19px]"><path d="M1 5l7-3 2 3 3 0 2-3 7 3-2 9-4 5-3-4 1-7-5-1-4 3-2-2z" fill="#3f3f46"/><ellipse cx="17" cy="9" rx="3.500" ry="4" fill="#3a63c7"/><ellipse cx="6" cy="6" rx="2" ry="2" fill="#8d8d98"/></svg>
    <span class="ml-[4px]">查找</span>
    <div class="ml-[6px] w-[511px] h-[22px] bg-white border border-[#a6a6a6]"></div>
  </div>
  <div class="mt-[7px] h-[343px] ml-[10px] flex shrink-0">
    <!-- tree -->
    <div class="relative w-[175px] h-full bg-white border border-[#a9a9ad]">
      <svg class="absolute left-0 top-0" width="40" height="60" fill="none" stroke="#9a9a9a" stroke-dasharray="1 1"><path d="M10 18V48H20M29 21V27H38M15 11h3"/></svg>
      <svg class="absolute left-[6px] top-[7px] w-[9px] h-[9px]"><use href="#minus"/></svg>
      <div class="h-[18px] mt-[1px] pl-[23px] flex items-center">公共</div>
      <div class="h-[18px] pl-[41px] flex items-center">表区域</div>
      <div class="h-[18px] ml-[20px] mr-px bg-[#0078d7] text-white pl-[3px] flex items-center">零件明细表</div>
    </div>
    <!-- property pane -->
    <div class="ml-[3px] w-[369px] h-full flex flex-col bg-[#f0f0f0] border-x border-[#c9c9cc]">
      <div class="mx-[2px] h-[10px] bg-[#e6e6ec] relative shrink-0">
        <div class="absolute left-[216px] top-0 w-[141px] h-[4px] bg-white border-x border-b border-[#a9a9ad]"></div>
      </div>
      <div class="mt-[4px] h-[20px] bg-gradient-to-b from-[#f7f8fa] to-[#e9ebef] flex items-center pl-[10px] text-[#4a4f57] shrink-0">标注
        <svg class="ml-auto mr-[11px] w-[9px] h-[11px] text-[#c40000]"><use href="#up2"/></svg></div>
      <div class="mx-[2px] mt-px h-[223px] bg-[#e6e6ec] px-[6px] pt-[5px] shrink-0">
        <div class="flex items-center h-[25px]">符号
          <div class="ml-auto w-[141px] h-[25px] bg-white border border-[#a9a9ad] flex items-center pl-[7px]"><span class="font-bold underline mr-[8px] font-['Liberation_Serif',serif] text-[13px]">U</span>下划线
            <div class="ml-auto w-[17px] h-full bg-[#e4e4e7] border-l border-[#b5b5b9] flex items-center justify-center"><svg class="w-[9px] h-[6px]"><use href="#dd"/></svg></div></div>
        </div>
        <div class="flex items-center h-[25px] mt-[3px]">主符号文本
          <div class="ml-auto w-[141px] h-[25px] bg-white border border-[#a9a9ad] flex items-center pl-[4px]">标注
            <div class="ml-auto w-[17px] h-full bg-[#e4e4e7] border-l border-[#b5b5b9] flex items-center justify-center"><svg class="w-[9px] h-[6px]"><use href="#dd"/></svg></div></div>
        </div>
        <div class="flex items-center h-[25px] mt-[2px]">参考符号文本
          <div class="ml-auto w-[141px] h-[25px] bg-white border border-[#a9a9ad] flex items-center pl-[4px]">无
            <div class="ml-auto w-[17px] h-full bg-[#e4e4e7] border-l border-[#b5b5b9] flex items-center justify-center"><svg class="w-[9px] h-[6px]"><use href="#dd"/></svg></div></div>
        </div>
        <div class="mt-[2px] h-[82px] bg-[#e1e1e6] border-t border-x border-[#bdbdc3] border-b-white border-b flex flex-col shrink-0">
          <div class="h-[18px] pl-[10px] pr-[12px] flex items-center text-[#333]">项<svg class="ml-auto w-[9px] h-[11px] text-[#c40000]"><use href="#up2"/></svg></div>
          <div class="mt-[8px] h-[22px] pl-[8px] pr-[8px] flex items-center">初始标注
            <div class="ml-auto w-[84px] h-[22px] bg-white border border-[#a9a9ad] pl-[4px] flex items-center text-[#1d4f80]">1</div></div>
          <div class="mt-[3px] h-[22px] pl-[8px] pr-[8px] flex items-center">增量
            <div class="ml-auto w-[82px] h-[22px] bg-white border border-[#a9a9ad] pr-[3px] flex items-center justify-end font-['Liberation_Serif',serif] text-[17px]">1</div></div>
        </div>
        <div class="relative mt-[11px] h-[37px] border border-[#dcdce2] flex items-center pl-[5px] pt-[10px]">
          <div class="absolute left-[9px] -top-[6px] bg-[#e6e6ec] text-[#222]">竖直标注组的指引线附着</div>
          <div class="w-[13px] h-[13px] rounded-full border border-[#555] bg-white flex items-center justify-center"><div class="w-[7px] h-[7px] rounded-full bg-[#444]"></div></div>
          <span class="ml-[4px]">顶部</span>
          <div class="ml-[14px] w-[13px] h-[13px] rounded-full border border-[#555] bg-white"></div>
          <span class="ml-[4px]">底部</span>
        </div>
      </div>
      <div class="mt-[4px] h-[20px] bg-gradient-to-b from-[#f7f8fa] to-[#e9ebef] flex items-center pl-[10px] text-[#4a4f57] shrink-0">手工输入的文本
        <svg class="ml-auto mr-[11px] w-[9px] h-[11px] text-[#c40000]"><use href="#up2"/></svg></div>
      <div class="mx-[2px] h-[55px] bg-[#e6e6ec] px-[6px] shrink-0">
        <div class="flex items-center pt-[7px]">
          <div class="w-[13px] h-[13px] bg-white border border-[#0078d7] flex items-center justify-center"><svg viewBox="0 0 11 11" class="w-[11px] h-[11px]" fill="none" stroke="#0078d7" stroke-width="1.300"><path d="M1.500 6l3 3 5-7"/></svg></div>
          <div class="ml-[3px] w-[52px] h-[20px] border border-dotted border-black flex items-center justify-center">高亮显示</div>
        </div>
        <div class="flex items-center mt-[5px]">颜色<div class="ml-auto -mt-[3px] w-[72px] h-[15px] bg-black border border-[#777]"></div></div>
      </div>
    </div>
    <!-- scrollbar -->
    <div class="ml-[3px] w-[15px] h-full bg-[#f0f0f0] flex flex-col items-center">
      <svg viewBox="0 0 10 8" class="mt-[7px] w-[8px] h-[7px]" fill="none" stroke="#666" stroke-width="1.800"><path d="M1 6l4-4 4 4"/></svg>
      <div class="mt-[113px] w-full h-[197px] bg-[#bdbdbd]"></div>
      <div class="w-full flex-1 flex items-center justify-center"><svg viewBox="0 0 10 8" class="w-[10px] h-[8px]" fill="none" stroke="#111" stroke-width="2.200"><path d="M1 2l4 4 4-4"/></svg></div>
    </div>
  </div>
  <div class="ml-[10px] mr-[10px] mt-px h-[19px] bg-gradient-to-b from-[#f7f8fa] to-[#e9ebef] border-b border-[#dcdde2] flex items-center pl-[11px] pr-[13px] text-[#4a4f57] shrink-0">继承
    <svg class="ml-auto w-[9px] h-[11px] text-[#1414c8]"><use href="#down2"/></svg></div>
  <div class="mt-[7px] mx-[7px] border-t border-[#aaaaaa] shrink-0"></div>
  <div class="mt-[5px] flex justify-end pr-[17px] shrink-0">
    <div class="w-[52px] h-[25px] border-2 border-[#0078d7] bg-[#f0f0f0] flex items-center justify-center">关闭</div>
  </div>
  <div class="mt-auto h-[7px] rounded-b-[2px] bg-gradient-to-b from-[#f0f0f0] to-[#a9a9a9] flex justify-center items-center shrink-0">
    <div class="w-[195px] h-[4px] border-y border-dotted border-[#b3b3b3]"></div>
  </div>
</div>

<!-- arrow over the dialog -->
<svg class="absolute left-0 top-0 pointer-events-none" width="1920" height="1048"><path d="M541 440L557 449 551 453 655.500 617 545 457 543 459z" fill="#f33c3c"/></svg>

<!-- status line -->
<div class="absolute left-[7px] top-[1024px] text-[12px] tracking-[1px] text-[#555] font-['Liberation_Mono','Noto_Sans_CJK_SC',monospace]">图纸页 "Sheet 1" 工作</div>
<div class="absolute left-0 top-[1039px] w-full h-[9px] border-t border-[#8a8a8a] bg-gradient-to-r from-[#233c50] via-[#4c5a8c] to-[#21404f] overflow-hidden flex">
  <div class="ml-[149px] w-[48px] h-full bg-[#12609f]"></div>
  <div class="ml-auto mr-[24px] mt-[1px] text-[12px] text-white whitespace-nowrap">下午 3:11:51</div>
</div>
</body>
</html>
